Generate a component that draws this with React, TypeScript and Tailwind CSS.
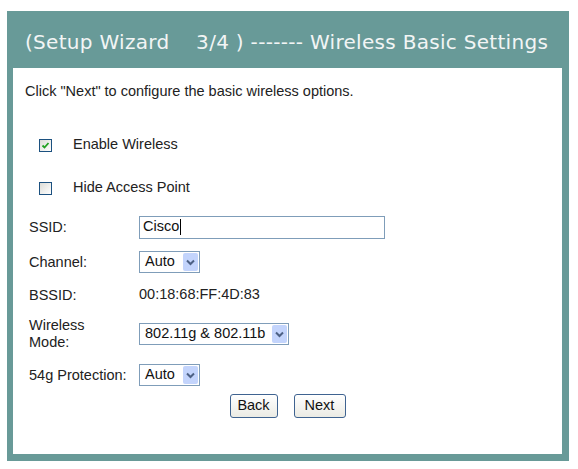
import React from "react";

const Chevron = () => (
  <svg width="9" height="7" viewBox="0 0 9 7" className="block">
    <path d="M1 1.5 L4.5 5 L8 1.5" fill="none" stroke="#4d6185" strokeWidth="2" />
  </svg>
);

const Select = ({ value, width }: { value: string; width: string }) => (
  <div
    className={`flex h-[22px] items-stretch border border-[#7f9db9] bg-white ${width}`}
  >
    <span className="flex flex-1 items-center pl-[5px] text-[14.5px] text-[#111]">{value}</span>
    <span className="m-[1px] flex w-[15px] items-center justify-center rounded-[2px] bg-[#c3d4fc]">
      <Chevron />
    </span>
  </div>
);

const Checkbox = ({ checked }: { checked: boolean }) => (
  <span className="flex h-[13px] w-[13px] items-center justify-center border border-[#1c5180] bg-gradient-to-br from-[#dcdcd7] to-white">
    {checked && (
      <svg width="9" height="9" viewBox="0 0 9 9">
        <path d="M1.5 4.5 L3.5 6.5 L7.5 2" fill="none" stroke="#21a121" strokeWidth="1.8" />
      </svg>
    )}
  </span>
);

const Row = ({ label, children, h }: { label: React.ReactNode; children: React.ReactNode; h: string }) => (
  <div className={`flex items-center ${h}`}>
    <div className="w-[110px] leading-[17px]">{label}</div>
    {children}
  </div>
);

const XpButton = ({ children, width }: { children: React.ReactNode; width: string }) => (
  <button
    className={`flex h-[24px] items-center justify-center rounded-[3px] border border-[#3f6390] bg-gradient-to-b from-white to-[#ebebe4] text-[14.5px] text-[#111] ${width}`}
  >
    {children}
  </button>
);

export default function App() {
  return (
    <div className="min-h-[469px] bg-white pl-[7px] pt-[11px]" style={{ fontFamily: '"Liberation Sans", Arial, sans-serif' }}>
      <div className="w-[562px] bg-[#689a98] pb-[7px] pl-[6px] pr-[7px]">
        <div
          className="flex h-[57px] items-center whitespace-pre pl-[12px] pt-[4px] text-[20px] tracking-[0.3px] text-[#f2f5f5]"
          style={{ fontFamily: '"DejaVu Sans", Verdana, sans-serif' }}
        >
          {"(Setup Wizard    3/4 ) ------- Wireless Basic Settings"}
        </div>
        <div className="h-[386px] bg-white text-[14.5px] text-[#222]">
          <div className="pl-[12px] pt-[15px] leading-[16px]">
            Click "Next" to configure the basic wireless options.
          </div>

          <div className="mt-[36px] flex h-[20px] items-center gap-[21px] pl-[26px]">
            <Checkbox checked />
            <span>Enable Wireless</span>
          </div>
          <div className="mt-[23px] flex h-[20px] items-center gap-[21px] pl-[26px]">
            <Checkbox checked={false} />
            <span>Hide Access Point</span>
          </div>

          <div className="mt-[17px] flex flex-col gap-[12px] pl-[16px]">
            <Row label="SSID:" h="h-[24px]">
              <div className="flex h-[23px] w-[246px] items-center border border-[#7f9db9] bg-white pl-[3px] text-[14.5px] text-[#111]">
                Cisco
                <span className="ml-[1px] h-[16px] w-[1px] bg-black" />
              </div>
            </Row>
            <Row label="Channel:" h="h-[22px]">
              <Select value="Auto" width="w-[61px]" />
            </Row>
            <Row label="BSSID:" h="h-[20px]">
              <span>00:18:68:FF:4D:83</span>
            </Row>
            <Row
              label={
                <>
                  Wireless
                  <br />
                  Mode:
                </>
              }
              h="h-[34px]"
            >
              <Select value="802.11g & 802.11b" width="w-[150px]" />
            </Row>
            <Row label="54g Protection:" h="h-[24px]">
              <Select value="Auto" width="w-[61px]" />
            </Row>
          </div>

          <div className="mt-[7px] flex justify-center gap-[16px]">
            <XpButton width="w-[48px]">Back</XpButton>
            <XpButton width="w-[52px]">Next</XpButton>
          </div>
        </div>
      </div>
    </div>
  );
}
